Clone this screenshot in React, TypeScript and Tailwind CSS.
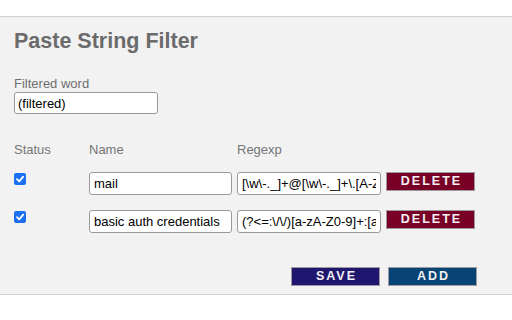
import React from "react";

const font = { fontFamily: '"Liberation Sans", Arial, Helvetica, sans-serif' };

function Check() {
  return (
    <span className="mt-[1.5px] flex h-[12px] w-[12px] items-center justify-center rounded-[2px] bg-[#1d6ff2]">
      <svg width="10" height="10" viewBox="0 0 10 10">
        <path d="M2 5.2 L4.2 7.4 L8.2 2.6" stroke="white" strokeWidth="1.8" fill="none" strokeLinecap="round" strokeLinejoin="round" />
      </svg>
    </span>
  );
}

function Field({ value, w }: { value: string; w: string }) {
  return (
    <input
      readOnly
      defaultValue={value}
      className={`${w} h-[23px] rounded-[3px] border border-[#9a9a9a] bg-white px-[4px] text-[13px] text-black outline-none`}
      style={font}
    />
  );
}

function Btn({ label, bg, h = "h-[19px]" }: { label: string; bg: string; h?: string }) {
  return (
    <div
      className={`${bg} ${h} flex w-[89px] items-center justify-center border border-[#a09aa0] pl-[2px] text-[12.5px] font-bold tracking-[2px] text-[#f4f0f2]`}
      style={font}
    >
      {label}
    </div>
  );
}

function Row({ name, regex }: { name: string; regex: string }) {
  return (
    <div className="flex items-start">
      <div className="w-[75px]">
        <Check />
      </div>
      <Field value={name} w="w-[143px]" />
      <div className="w-[5px]" />
      <Field value={regex} w="w-[144px]" />
      <div className="w-[5px]" />
      <Btn label="DELETE" bg="bg-[#780027]" h="h-[19.5px]" />
    </div>
  );
}

export default function App() {
  return (
    <div className="h-[320px] w-[512px] bg-white" style={font}>
      <div className="h-[16px]" />
      <div className="h-[279px] border-y border-[#d0d0d0] bg-[#f2f2f2] pl-[14px] pt-[11px]">
        <div className="h-[26px] text-[21.5px] font-bold leading-[26px] text-[#6b6b6b]">Paste String Filter</div>
        <div className="mt-[21.5px] text-[13px] leading-[15px] text-[#6f6f6f]">Filtered word</div>
        <input
          readOnly
          defaultValue="(filtered)"
          className="mt-[0.5px] h-[22px] w-[144px] rounded-[3px] border border-[#9a9a9a] bg-white px-[3px] text-[13px] text-black outline-none"
          style={font}
        />
        <div className="mt-[27.5px] flex text-[13px] leading-[15px] text-[#757575]">
          <div className="w-[75px]">Status</div>
          <div className="w-[148px]">Name</div>
          <div>Regexp</div>
        </div>
        <div className="mt-[14.5px] flex flex-col gap-[15px]">
          <Row name="mail" regex="[\w\-._]+@[\w\-._]+\.[A-Za-z]+" />
          <Row name="basic auth credentials" regex="(?<=:\/\/)[a-zA-Z0-9]+:[a-zA-Z0-9]+" />
        </div>
        <div className="mt-[34px] flex gap-[8px] pl-[277px]">
          <Btn label="SAVE" bg="bg-[#1f1670]" />
          <Btn label="ADD" bg="bg-[#074374]" />
        </div>
      </div>
    </div>
  );
}
